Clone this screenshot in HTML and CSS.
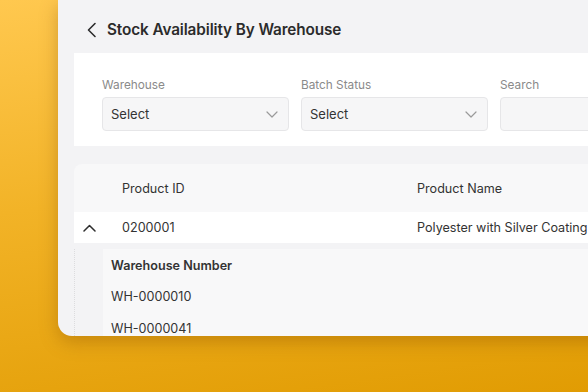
FILE: index.html
```html
<!DOCTYPE html>
<html lang="en">
<head>
  <meta charset="UTF-8">
  <meta name="viewport" content="width=device-width, initial-scale=1">
  <title>Stock Availability By Warehouse</title>
  <link rel="stylesheet" href="styles.css">
</head>
<body>

  <div class="window">
    <header class="page-head">
      <svg class="back" width="11" height="16" viewBox="0 0 11 16" fill="none">
        <path d="M9 1.5L2.5 8L9 14.5" stroke="#2d2d2d" stroke-width="1.6" stroke-linecap="round" stroke-linejoin="round"/>
      </svg>
      <h1>Stock Availability By Warehouse</h1>
    </header>

    <section class="filters">
      <div class="field">
        <label>Warehouse</label>
        <div class="select">
          <span>Select</span>
          <svg width="12" height="7" viewBox="0 0 12 7" fill="none"><path d="M1 1l5 5 5-5" stroke="#9a9a9a" stroke-width="1.2" stroke-linecap="round" stroke-linejoin="round"/></svg>
        </div>
      </div>
      <div class="field">
        <label>Batch Status</label>
        <div class="select">
          <span>Select</span>
          <svg width="12" height="7" viewBox="0 0 12 7" fill="none"><path d="M1 1l5 5 5-5" stroke="#9a9a9a" stroke-width="1.2" stroke-linecap="round" stroke-linejoin="round"/></svg>
        </div>
      </div>
      <div class="field">
        <label>Search</label>
        <div class="select"></div>
      </div>
    </section>

    <section class="table-card">
      <div class="row head">
        <div class="cell toggle"></div>
        <div class="cell id">Product ID</div>
        <div class="cell name">Product Name</div>
      </div>
      <div class="row item">
        <div class="cell toggle">
          <svg width="13" height="8" viewBox="0 0 13 8" fill="none"><path d="M1 7l5.5-5.5L12 7" stroke="#2d2d2d" stroke-width="1.5" stroke-linecap="round" stroke-linejoin="round"/></svg>
        </div>
        <div class="cell id">0200001</div>
        <div class="cell name">Polyester with Silver Coating</div>
      </div>
      <div class="expanded">
        <div class="sub-table">
          <div class="sub-row sub-head">Warehouse Number</div>
          <div class="sub-row">WH-0000010</div>
          <div class="sub-row">WH-0000041</div>
        </div>
      </div>
    </section>
  </div>

</body>
</html>
```

FILE: styles.css
```css
* { margin:0; padding:0; box-sizing:border-box; }
body {
  width:588px; height:392px; overflow:hidden;
  font-family:'Inter', 'Noto Sans', sans-serif; color:#333;
  background:linear-gradient(172deg, #ffc84f 0%, #f2b327 45%, #e19c03 100%);
}
.window {
  margin-left:58px; width:600px; height:336px;
  padding-left:16px; overflow:hidden;
  background:#f3f3f5;
  border-radius:0 0 0 14px;
  box-shadow:0 6px 18px rgba(130,75,0,0.35);
}
.page-head {
  display:flex; align-items:center; gap:10px;
  height:53px; padding:6px 0 0 12px;
}
.page-head h1 { font-size:15.3px; font-weight:600; color:#2b2b2b; letter-spacing:-0.1px; }
.filters {
  display:flex; gap:12px;
  background:#fff; padding:24px 0 15px 28px;
}
.field { display:flex; flex-direction:column; gap:4px; width:187px; flex:none; }
.field label { font-size:11.8px; line-height:16px; color:#8a8a8a; }
.select {
  display:flex; align-items:center; justify-content:space-between;
  height:34px; padding:0 10px 0 8px;
  background:#f6f6f7; border:1px solid #e6e6e8; border-radius:4px;
  font-size:13px; color:#333;
}
.table-card {
  margin-top:18px; background:#f3f3f5;
  border-radius:8px 0 0 0; overflow:hidden;
}
.row { display:flex; align-items:center; font-size:12.6px; color:#333; }
.row.head { height:48px; background:#f8f8f9; }
.row.item { height:31px; background:#fff; }
.cell.toggle { width:48px; padding-left:9px; display:flex; align-items:center; }
.cell.id { width:295px; }
.cell.name { white-space:nowrap; }
.expanded {
  margin-top:6px; padding-left:28px;
  border-left:1px dotted #dcdcde;
}
.sub-table { background:#f8f8f9; padding-left:8px; }
.sub-row { height:31.5px; display:flex; align-items:center; font-size:12.6px; color:#333; }
.sub-row.sub-head { font-weight:600; height:32px; }
```
